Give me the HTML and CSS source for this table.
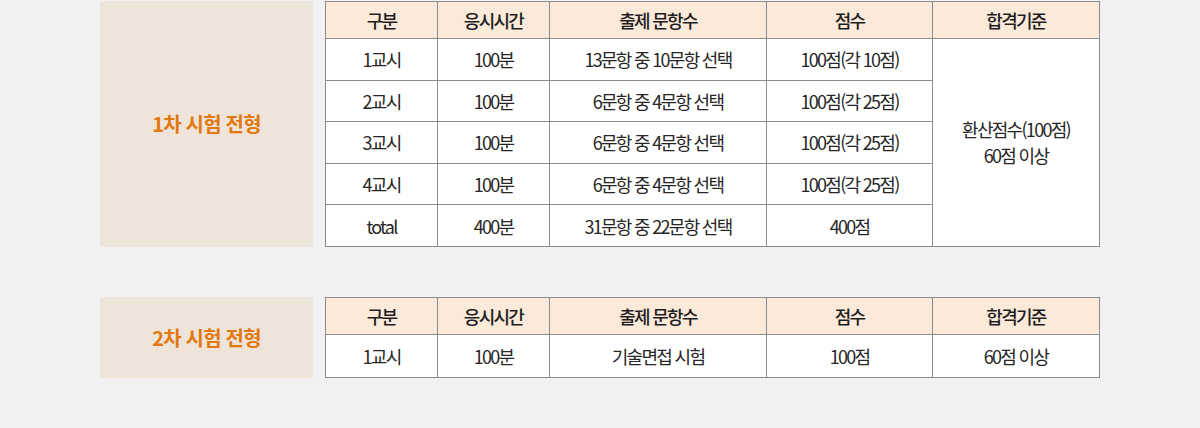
FILE: index.html
```html
<!DOCTYPE html>
<html lang="ko">
<head>
<meta charset="utf-8">
<link rel="stylesheet" href="styles.css">
</head>
<body>
<div class="page">
  <section class="exam exam-first">
    <div class="label">1차 시험 전형</div>
    <table class="grid">
      <colgroup>
        <col class="c1"><col class="c2"><col class="c3"><col class="c4"><col class="c5">
      </colgroup>
      <thead>
        <tr><th>구분</th><th>응시시간</th><th>출제 문항수</th><th>점수</th><th>합격기준</th></tr>
      </thead>
      <tbody>
        <tr><td>1교시</td><td>100분</td><td>13문항 중 10문항 선택</td><td>100점(각 10점)</td><td rowspan="5" class="merged"><span class="line">환산점수(100점)</span><span class="line">60점 이상</span></td></tr>
        <tr><td>2교시</td><td>100분</td><td>6문항 중 4문항 선택</td><td>100점(각 25점)</td></tr>
        <tr><td>3교시</td><td>100분</td><td>6문항 중 4문항 선택</td><td>100점(각 25점)</td></tr>
        <tr><td>4교시</td><td>100분</td><td>6문항 중 4문항 선택</td><td>100점(각 25점)</td></tr>
        <tr><td>total</td><td>400분</td><td>31문항 중 22문항 선택</td><td>400점</td></tr>
      </tbody>
    </table>
  </section>
  <section class="exam exam-second">
    <div class="label">2차 시험 전형</div>
    <table class="grid">
      <colgroup>
        <col class="c1"><col class="c2"><col class="c3"><col class="c4"><col class="c5">
      </colgroup>
      <thead>
        <tr><th>구분</th><th>응시시간</th><th>출제 문항수</th><th>점수</th><th>합격기준</th></tr>
      </thead>
      <tbody>
        <tr><td>1교시</td><td>100분</td><td>기술면접 시험</td><td>100점</td><td>60점 이상</td></tr>
      </tbody>
    </table>
  </section>
</div>
</body>
</html>
```

FILE: styles.css
```css
* { box-sizing: border-box; }
html, body { margin: 0; padding: 0; }
body {
  background: #f1f1f1;
  font-family: "Noto Sans CJK KR", "Noto Sans", sans-serif;
  color: #333;
}
.page {
  padding: 1px 0 0 100px;
  display: flex;
  flex-direction: column;
  gap: 50px;
}
.exam {
  display: flex;
  align-items: stretch;
  gap: 12px;
}
.label {
  width: 213px;
  background: #eee4da;
  color: #e3780e;
  font-weight: 700;
  font-size: 20px;
  letter-spacing: -0.8px;
  display: flex;
  align-items: center;
  justify-content: center;
}
.grid {
  border-collapse: collapse;
  width: 774px;
  table-layout: fixed;
  background: #fff;
  font-size: 18px;
  letter-spacing: -1.7px;
}
.c1 { width: 112px; }
.c2 { width: 112px; }
.c3 { width: 217px; }
.c4 { width: 166px; }
.c5 { width: 167px; }
.grid th, .grid td {
  border: 1px solid #8c8c8c;
  text-align: center;
  padding: 0;
  line-height: 20px;
}
.grid th {
  background: #fbe9da;
  font-weight: 500;
  color: #1e1e1e;
  height: 37px;
}
.grid td {
  height: 41.6px;
  font-weight: 400;
  color: #262626;
}
.exam-second .grid td { height: 43px; }
.grid td.merged .line {
  display: block;
  line-height: 26px;
}
```
